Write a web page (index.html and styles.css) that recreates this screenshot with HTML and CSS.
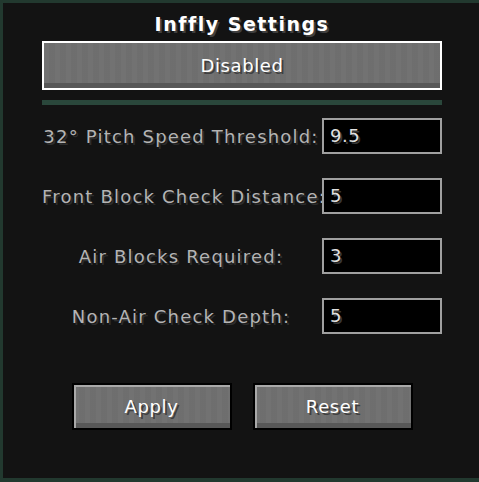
FILE: index.html
```html
<!DOCTYPE html>
<html>
<head>
<meta charset="utf-8">
<link rel="stylesheet" href="styles.css">
</head>
<body>
<div class="frame">
  <div class="panel">
    <h1 class="title">Inffly Settings</h1>
    <button class="mc-btn toggle">Disabled</button>
    <div class="sep"></div>
    <div class="rows">
      <div class="row"><span class="label">32° Pitch Speed Threshold:</span><input class="field" value="9.5"></div>
      <div class="row"><span class="label">Front Block Check Distance:</span><input class="field" value="5"></div>
      <div class="row"><span class="label">Air Blocks Required:</span><input class="field" value="3"></div>
      <div class="row"><span class="label">Non-Air Check Depth:</span><input class="field" value="5"></div>
    </div>
    <div class="actions">
      <button class="mc-btn action">Apply</button>
      <button class="mc-btn action">Reset</button>
    </div>
  </div>
</div>
</body>
</html>
```
FILE: styles.css
```css
html, body {
  margin: 0;
  padding: 0;
  background: #121212;
}
body {
  width: 479px;
  height: 482px;
  overflow: hidden;
  font-family: "DejaVu Sans", sans-serif;
}
.frame {
  box-sizing: border-box;
  width: 479px;
  height: 482px;
  border-top: 3px solid #22392f;
  border-left: 3px solid #22392f;
  border-bottom: 4px solid #22392f;
  background: #131313;
}
.panel {
  width: 400px;
  margin-left: 39px;
  display: flex;
  flex-direction: column;
}
.title {
  margin: 10px 0 0;
  height: 28px;
  text-align: center;
  font-size: 19px;
  font-weight: bold;
  letter-spacing: 1.5px;
  color: #ffffff;
  text-shadow: 2px 2px 0 #3f3f3f;
  line-height: 22px;
}
.mc-btn {
  font-family: "DejaVu Sans", sans-serif;
  font-size: 18px;
  letter-spacing: 0.6px;
  color: #ffffff;
  text-shadow: 2px 2px 0 #3f3f3f;
  cursor: default;
  padding: 0;
  background-color: #707070;
  background-image:
    linear-gradient(to bottom, rgba(0,0,0,0) 0, rgba(0,0,0,0) calc(100% - 5px), #585858 calc(100% - 5px)),
    repeating-linear-gradient(90deg, rgba(255,255,255,0.015) 0 5px, rgba(0,0,0,0.015) 5px 11px);
}
.toggle {
  box-sizing: border-box;
  width: 400px;
  height: 49px;
  border: 2px solid #ffffff;
}
.sep {
  margin-top: 10px;
  height: 5px;
  width: 400px;
  background: #2a473b;
}
.rows {
  margin-top: 13px;
  display: flex;
  flex-direction: column;
  gap: 24px;
}
.row {
  display: grid;
  grid-template-columns: 278px 120px;
  column-gap: 2px;
  align-items: center;
  height: 36px;
}
.label {
  text-align: center;
  font-size: 18px;
  letter-spacing: 1.2px;
  color: #b4b4b4;
  text-shadow: 2px 2px 0 #2d2d2d;
  white-space: nowrap;
}
.field {
  box-sizing: border-box;
  width: 120px;
  height: 36px;
  margin: 0;
  border: 2px solid #a0a0a0;
  background: #000000;
  color: #e0e0e0;
  font-family: "DejaVu Sans", sans-serif;
  font-size: 18px;
  letter-spacing: 0.6px;
  text-shadow: 2px 2px 0 #383838;
  padding: 0 0 2px 6px;
  outline: none;
}
.actions {
  margin-top: 49px;
  display: flex;
  justify-content: center;
  gap: 21px;
}
.action {
  box-sizing: border-box;
  width: 160px;
  height: 47px;
  border: 2px solid #000000;
  box-shadow: inset 2px 2px 0 #a9a9a9;
}
```
